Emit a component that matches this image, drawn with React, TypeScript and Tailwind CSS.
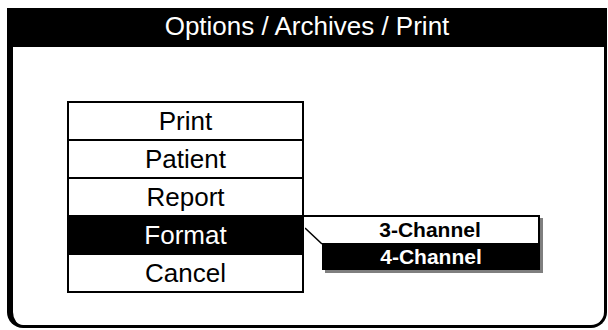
import React from "react";

const items = ["Print", "Patient", "Report", "Format", "Cancel"];
const selected = "Format";

export default function App() {
  return (
    <div
      className="h-[330px] w-[608px] bg-white pl-[7px] pt-[8px]"
      style={{ fontFamily: '"Liberation Sans", Arial, sans-serif' }}
    >
      <div className="flex h-[320px] w-[600px] flex-col overflow-hidden rounded-b-[16px] border-b-[3px] border-l-[6px] border-r-[3px] border-black bg-white">
        {/* title bar */}
        <div className="-ml-[6px] -mr-[3px] flex h-[39px] items-center justify-center bg-black pb-[2px] text-[26px] text-white">
          Options / Archives / Print
        </div>

        {/* body */}
        <div className="relative flex-1 pl-[54px] pt-[54px]">
          <div className="flex w-[237px] flex-col border-2 border-black">
            {items.map((item, i) => (
              <div
                key={item}
                className={[
                  "flex h-[36px] items-center justify-center text-[26px] leading-none",
                  i > 0 ? "box-content border-t-2 border-black" : "",
                  item === selected ? "bg-black text-white" : "text-black",
                ].join(" ")}
              >
                {item}
              </div>
            ))}
          </div>

          {/* submenu pull-out */}
          <div className="absolute left-[290px] top-[168px] h-[2px] w-[20px] bg-black" />
          <svg
            className="absolute left-[292px] top-[180px]"
            width="18"
            height="18"
            viewBox="0 0 18 18"
          >
            <line x1="0" y1="1" x2="17" y2="17" stroke="black" strokeWidth="1.5" />
          </svg>
          <div className="absolute left-[309px] top-[168px] w-[218px] shadow-[3px_3px_0_#7f7f7f]">
            <div className="flex h-[28px] items-center justify-center border-r-2 border-t-2 border-black bg-white text-[21px] font-bold text-black">
              3-Channel
            </div>
            <div className="flex h-[27px] items-center justify-center bg-black text-[21px] font-bold text-white">
              4-Channel
            </div>
          </div>
        </div>
      </div>
    </div>
  );
}
